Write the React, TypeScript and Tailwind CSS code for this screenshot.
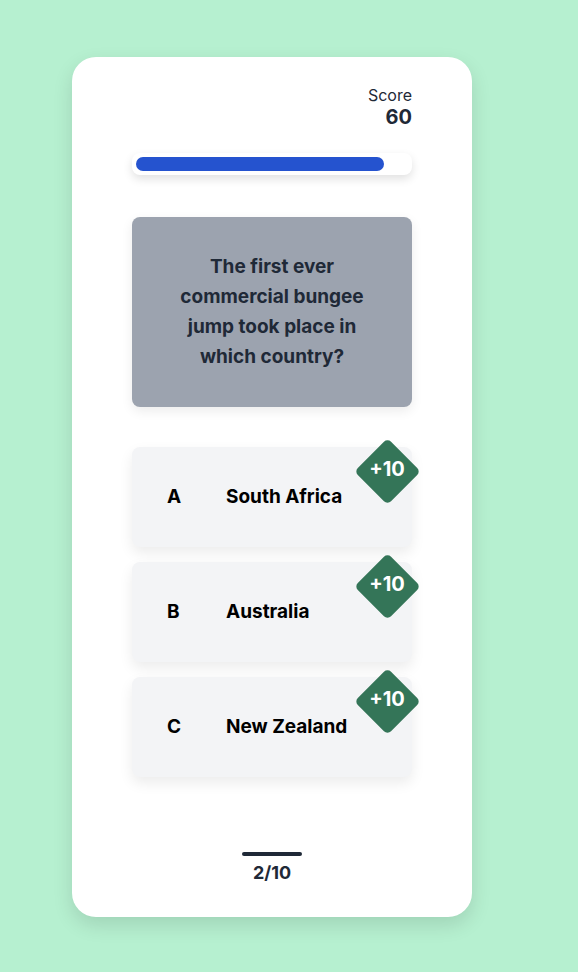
import React from 'react';

const options = [
  { letter: 'A', text: 'South Africa' },
  { letter: 'B', text: 'Australia' },
  { letter: 'C', text: 'New Zealand' },
];

function OptionCard({ letter, text }: { letter: string; text: string }) {
  return (
    <button
      type="button"
      className="relative flex h-[100px] w-full items-center rounded-lg bg-[#f3f4f6] text-left shadow-[0_6px_14px_rgba(0,0,0,0.08)]"
    >
      <span className="w-[94px] pl-[35px] text-[19px] font-bold text-black">{letter}</span>
      <span className="text-[19px] font-bold text-black">{text}</span>
      <div className="absolute right-[-7px] top-[-8px] flex h-[64px] w-[64px] items-center justify-center">
        <div className="absolute h-[47px] w-[47px] rotate-45 rounded-[5px] bg-[#347558]" />
        <span className="relative -mt-[5px] text-[20px] font-bold text-white">+10</span>
      </div>
    </button>
  );
}

export default function App() {
  return (
    <div
      className="min-h-screen bg-[#b6f0d0] pl-[72px] pt-[57px]"
      style={{ fontFamily: 'Inter, "Noto Sans", sans-serif' }}
    >
      <div className="flex h-[860px] w-[400px] flex-col rounded-3xl bg-white px-[60px] pt-[26px] shadow-[0_8px_20px_rgba(0,0,0,0.12)]">
        <div className="flex flex-col items-end text-[#1f2937]">
          <span className="text-base leading-6">Score</span>
          <span className="text-xl font-bold leading-5">60</span>
        </div>

        <div className="mt-[26px] rounded-lg bg-white p-1 shadow-[0_4px_10px_rgba(0,0,0,0.12)]">
          <div className="h-[14px] w-[248px] rounded-full bg-[#2553cf]" />
        </div>

        <div className="mt-[42px] flex h-[190px] items-center justify-center rounded-lg bg-[#9ca3af] px-10 shadow-[0_4px_12px_rgba(0,0,0,0.08)]">
          <p className="text-center text-[19px] font-bold leading-[30px] text-[#1f2937]">
            The first ever commercial bungee jump took place in which country?
          </p>
        </div>

        <div className="mt-[40px] flex flex-col gap-[15px]">
          {options.map((o) => (
            <OptionCard key={o.letter} letter={o.letter} text={o.text} />
          ))}
        </div>

        <div className="mt-[75px] flex flex-col items-center">
          <div className="h-1 w-[60px] rounded-full bg-[#1f2937]" />
          <span className="mt-[3px] text-lg font-bold text-[#1f2937]">2/10</span>
        </div>
      </div>
    </div>
  );
}
